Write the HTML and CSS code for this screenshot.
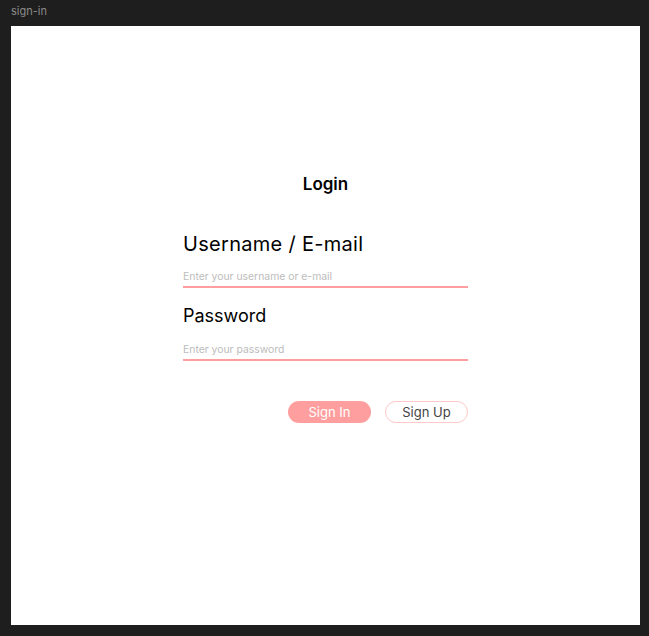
FILE: index.html
```html
<!DOCTYPE html>
<html>
<head>
<meta charset="utf-8">
<link rel="stylesheet" href="styles.css">
</head>
<body>
<div class="frame-label">sign-in</div>
<div class="frame">
  <div class="form">
    <h1 class="title">Login</h1>
    <label class="label label-user">Username / E-mail</label>
    <div class="input">Enter your username or e-mail</div>
    <label class="label label-pw">Password</label>
    <div class="input input-pw">Enter your password</div>
    <div class="actions">
      <button class="btn btn-primary">Sign In</button>
      <button class="btn btn-outline">Sign Up</button>
    </div>
  </div>
</div>
</body>
</html>
```
FILE: styles.css
```css
html, body { margin: 0; padding: 0; }
body {
  background: #1e1e1e;
  width: 649px;
  height: 636px;
  font-family: Inter, "Noto Sans", sans-serif;
  overflow: hidden;
}
.frame-label {
  height: 26px;
  box-sizing: border-box;
  padding: 5px 0 0 11px;
  font-size: 11px;
  line-height: 13px;
  color: #8a8a8a;
}
.frame {
  margin-left: 11px;
  width: 629px;
  height: 599px;
  background: #fff;
  display: flex;
  justify-content: center;
}
.form {
  width: 285px;
  display: flex;
  flex-direction: column;
  padding-top: 147px;
}
.title {
  margin: 0;
  text-align: center;
  font-size: 17px;
  font-weight: 600;
  line-height: 22px;
  color: #000;
}
.label {
  margin-top: 38px;
  font-size: 18px;
  line-height: 22px;
  color: #000;
}
.label-user { font-size: 20px; letter-spacing: 0.3px; }
.label-pw { margin-top: 17px; }
.input {
  margin-top: 16px;
  font-size: 10.4px;
  line-height: 12px;
  color: #bcbcbc;
  padding-bottom: 3px;
  border-bottom: 2px solid #ff9e9e;
}
.input-pw { margin-top: 17px; }
.actions {
  display: flex;
  justify-content: flex-end;
  gap: 14px;
  margin-top: 40px;
}
.btn {
  width: 83px;
  height: 22px;
  border-radius: 11px;
  font-family: Inter, "Noto Sans", sans-serif;
  font-size: 13px;
  padding: 0;
  box-sizing: border-box;
}
.btn-primary {
  background: #ff9e9e;
  color: #fff;
  border: none;
}
.btn-outline {
  background: #fff;
  color: #444;
  border: 1px solid #ffc9c9;
}
```
